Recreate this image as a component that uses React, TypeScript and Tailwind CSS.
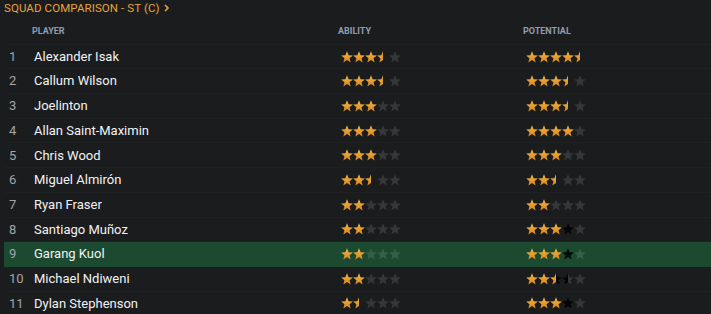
import React, { useId } from "react";

type Half = "g" | "e" | "k" | "n";

const STAR =
  "M6 0.3 L7.6 4.25 L11.85 4.5 L8.55 7.2 L9.65 11.4 L6 9.05 L2.35 11.4 L3.45 7.2 L0.15 4.5 L4.4 4.25 Z";

function fillFor(h: Half, grad: string): string {
  if (h === "g") return `url(#${grad})`;
  if (h === "e") return "rgba(255,255,255,0.12)";
  if (h === "k") return "rgba(0,0,0,0.85)";
  return "none";
}

function Star({ left, right }: { left: Half; right: Half }) {
  const id = useId().replace(/:/g, "");
  const grad = `g${id}`;
  const lc = `l${id}`;
  const rc = `r${id}`;
  return (
    <svg width="12" height="12" viewBox="0 0 12 12" className="block shrink-0">
      <defs>
        <linearGradient id={grad} x1="0" y1="0" x2="0" y2="1">
          <stop offset="0" stopColor="#f5b847" />
          <stop offset="1" stopColor="#d7861c" />
        </linearGradient>
        <clipPath id={lc}>
          <rect x="0" y="0" width="6" height="12" />
        </clipPath>
        <clipPath id={rc}>
          <rect x="6" y="0" width="6" height="12" />
        </clipPath>
      </defs>
      <path d={STAR} fill={fillFor(left, grad)} clipPath={`url(#${lc})`} />
      <path d={STAR} fill={fillFor(right, grad)} clipPath={`url(#${rc})`} />
    </svg>
  );
}

function Stars({ spec }: { spec: string }) {
  const parts = spec.split(" ");
  return (
    <div className="flex pl-[3px]">
      {parts.map((p, i) => (
        <Star key={i} left={p[0] as Half} right={p[1] as Half} />
      ))}
    </div>
  );
}

const rows: { n: number; name: string; ab: string; pot: string }[] = [
  { n: 1, name: "Alexander Isak", ab: "gg gg gg gn ee", pot: "gg gg gg gg gn" },
  { n: 2, name: "Callum Wilson", ab: "gg gg gg gn ee", pot: "gg gg gg gn ee" },
  { n: 3, name: "Joelinton", ab: "gg gg gg ee ee", pot: "gg gg gg gn ee" },
  { n: 4, name: "Allan Saint-Maximin", ab: "gg gg gg ee ee", pot: "gg gg gg gg ee" },
  { n: 5, name: "Chris Wood", ab: "gg gg gg ee ee", pot: "gg gg gg ee ee" },
  { n: 6, name: "Miguel Almirón", ab: "gg gg gn ee ee", pot: "gg gg gn ee ee" },
  { n: 7, name: "Ryan Fraser", ab: "gg gg ee ee ee", pot: "gg gg ee ee ee" },
  { n: 8, name: "Santiago Muñoz", ab: "gg gg ee ee ee", pot: "gg gg gg kk ee" },
  { n: 9, name: "Garang Kuol", ab: "gg gg ee ee ee", pot: "gg gg gg kk ee" },
  { n: 10, name: "Michael Ndiweni", ab: "gg gg ee ee ee", pot: "gg gg gk ke ee" },
  { n: 11, name: "Dylan Stephenson", ab: "gg gn ee ee ee", pot: "gg gg gg kk ee" },
];

export default function App() {
  return (
    <div
      className="w-[711px] h-[314px] overflow-hidden bg-[#1b1c1e] text-white"
      style={{ fontFamily: "Roboto, 'Noto Sans', sans-serif" }}
    >
      <div className="h-[20px] pl-[4px] pt-[1px] flex items-start">
        <span className="text-[11.5px] leading-[14px] text-[#e6a43c] tracking-[0.1px]">
          SQUAD COMPARISON - ST (C)
        </span>
        <svg width="7" height="14" viewBox="0 0 7 14" className="ml-[3px]">
          <path d="M2 4 L5 7 L2 10" stroke="#e6a43c" strokeWidth="1.6" fill="none" />
        </svg>
      </div>
      <div className="pl-[4px]">
        <div className="flex items-center h-[24.7px] border-b border-[#1f2022]">
          <div className="w-[28px]" />
          <div className="w-[306px] text-[9px] font-bold text-[#8e9eb2]">PLAYER</div>
          <div className="w-[185px] text-[9px] font-bold text-[#8e9eb2]">ABILITY</div>
          <div className="text-[9px] font-bold text-[#8e9eb2]">POTENTIAL</div>
        </div>
        {rows.map((r) => (
          <div
            key={r.n}
            className={`flex items-center h-[24.7px] border-b ${
              r.n === 9 ? "bg-[#1b4a31] border-[#1b4a31]" : "border-[#1f2022]"
            }`}
          >
            <div className="w-[30px] pl-[5px] text-[13px] text-[#a3a5a8]">{r.n}</div>
            <div className="w-[304px] text-[13px] text-[#f2f2f2]">{r.name}</div>
            <div className="w-[185px]">
              <Stars spec={r.ab} />
            </div>
            <div>
              <Stars spec={r.pot} />
            </div>
          </div>
        ))}
      </div>
    </div>
  );
}
